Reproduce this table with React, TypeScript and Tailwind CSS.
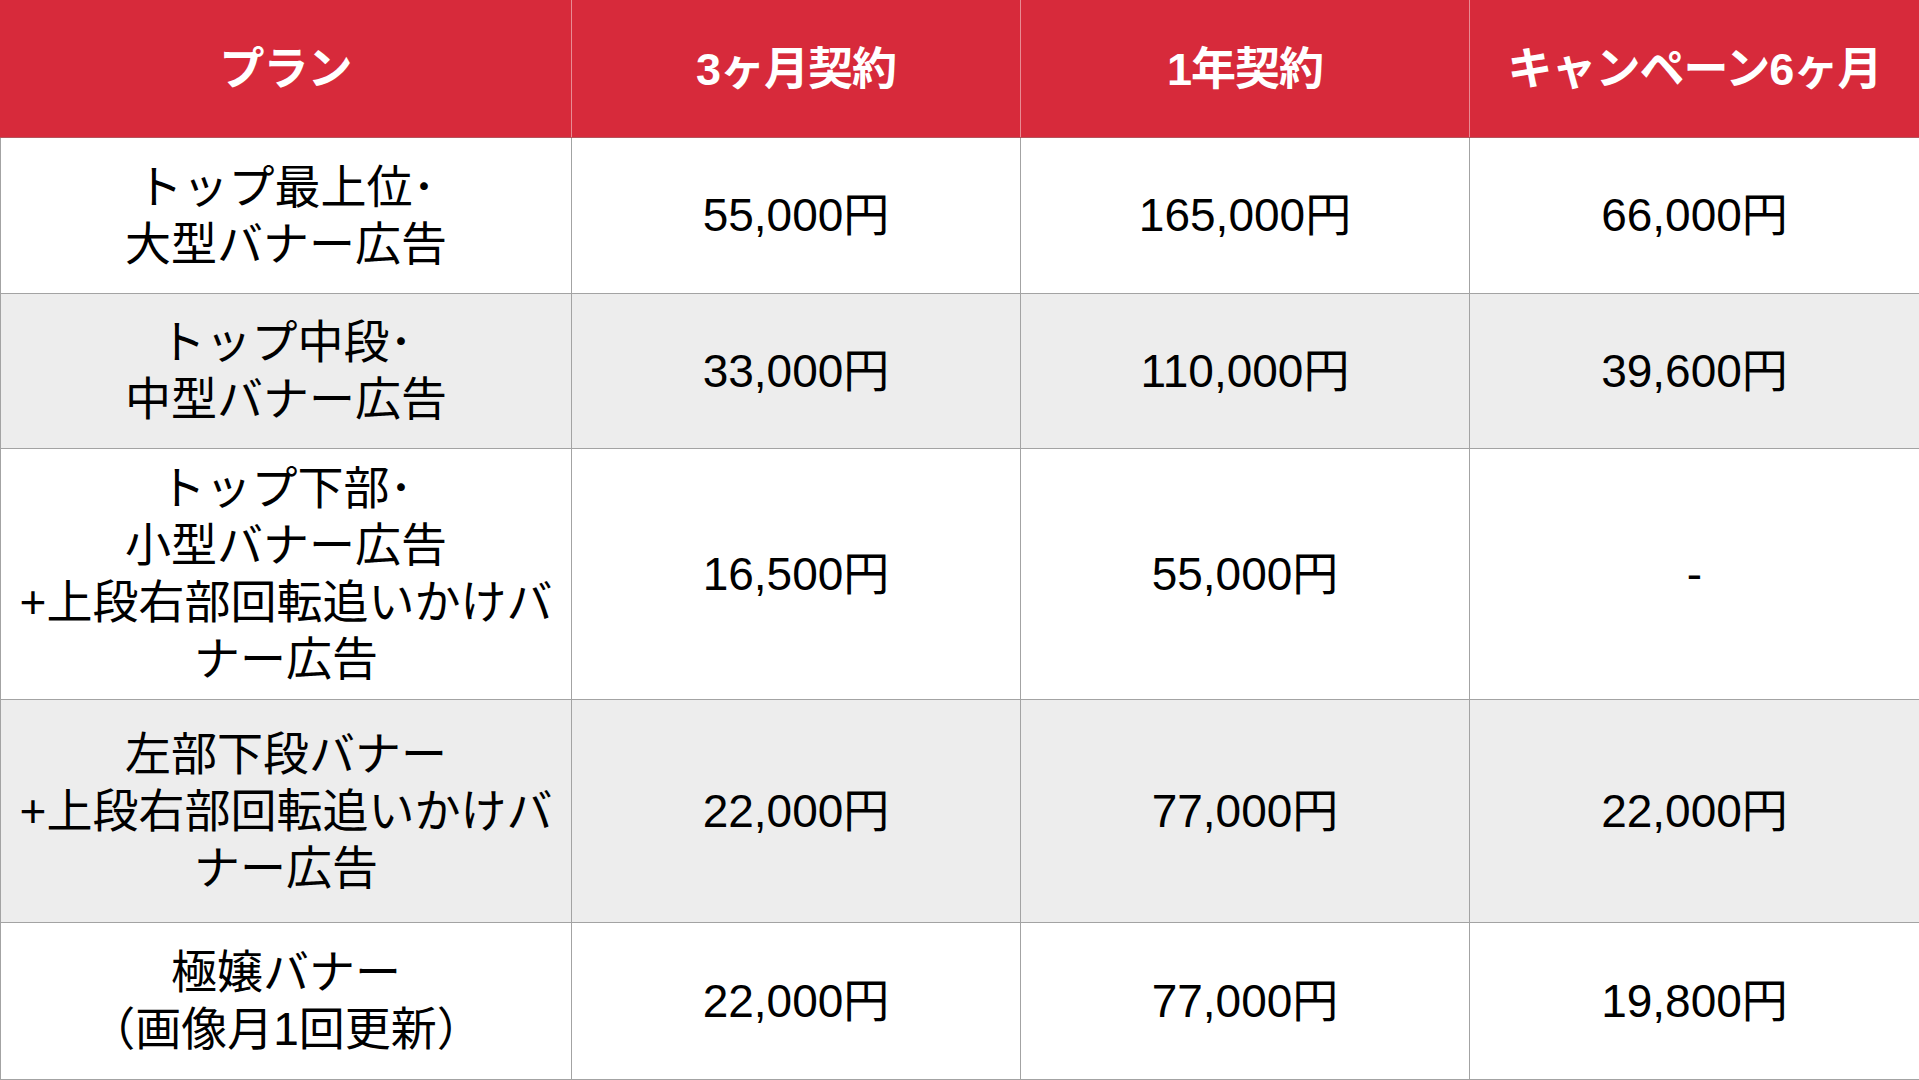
const headers = ["プラン", "3ヶ月契約", "1年契約", "キャンペーン6ヶ月"];

type Row = {
  plan: string[];
  prices: string[];
  height: string;
  bg: string;
};

const rows: Row[] = [
  {
    plan: ["トップ最上位･", "大型バナー広告"],
    prices: ["55,000円", "165,000円", "66,000円"],
    height: "h-[156px]",
    bg: "bg-white",
  },
  {
    plan: ["トップ中段･", "中型バナー広告"],
    prices: ["33,000円", "110,000円", "39,600円"],
    height: "h-[155px]",
    bg: "bg-[#ededed]",
  },
  {
    plan: ["トップ下部･", "小型バナー広告", "+上段右部回転追いかけバ", "ナー広告"],
    prices: ["16,500円", "55,000円", "-"],
    height: "h-[251px]",
    bg: "bg-white",
  },
  {
    plan: ["左部下段バナー", "+上段右部回転追いかけバ", "ナー広告"],
    prices: ["22,000円", "77,000円", "22,000円"],
    height: "h-[223px]",
    bg: "bg-[#ededed]",
  },
  {
    plan: ["極嬢バナー", "（画像月1回更新）"],
    prices: ["22,000円", "77,000円", "19,800円"],
    height: "h-[157px]",
    bg: "bg-white",
  },
];

const cols = "grid grid-cols-[572px_449px_449px_449px]";

export default function App() {
  return (
    <div className="w-[1919px] h-[1080px] bg-white text-black font-['Liberation_Sans','Noto_Sans_CJK_JP',sans-serif] overflow-hidden">
      {/* header */}
      <div className={`${cols} h-[138px] bg-[#d72a3b] border-b border-[#b5545c]`}>
        {headers.map((h, i) => (
          <div
            key={h}
            className={`flex items-center justify-center pt-[3px] text-white font-bold text-[45px] tracking-[-1px] ${
              i < 3 ? "border-r border-[#e98a92]" : ""
            }`}
          >
            {h}
          </div>
        ))}
      </div>

      {/* body rows */}
      {rows.map((r, ri) => (
        <div key={ri} className={`${cols} ${r.height} ${r.bg} border-b border-[#a3a3a3]`}>
          <div className="flex flex-col items-center justify-center text-center text-[46px] leading-[57px] border-l border-r border-[#a3a3a3]">
            {r.plan.map((line) => (
              <span key={line} className="whitespace-nowrap">
                {line}
              </span>
            ))}
          </div>
          {r.prices.map((p, pi) => (
            <div
              key={pi}
              className={`flex items-center justify-center text-[46px] ${
                pi < 2 ? "border-r border-[#a3a3a3]" : ""
              }`}
            >
              {p}
            </div>
          ))}
        </div>
      ))}
    </div>
  );
}
